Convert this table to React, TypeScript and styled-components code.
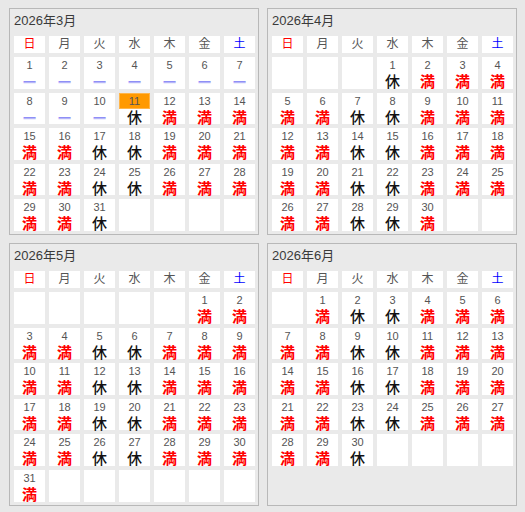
import React from 'react'
import styled, { createGlobalStyle } from 'styled-components'

const GlobalStyle = createGlobalStyle`
  html, body {
    margin: 0;
    padding: 0;
    background: #e8e8e8;
    font-family: "Liberation Sans", "Noto Sans CJK JP", sans-serif;
  }
  * { box-sizing: border-box; }
`

const Page = styled.div`
  display: grid;
  grid-template-columns: 250px 250px;
  gap: 8px;
  padding: 8px 0 6px 9px;
`

const Panel = styled.section`
  display: flex;
  flex-direction: column;
  border: 1px solid #b8b8b8;
  background: #eaeaea;
  padding: 4px 3px 3px 4px;
`

const Title = styled.h2`
  margin: 0 0 4px;
  height: 19px;
  font-size: 13px;
  font-weight: normal;
  line-height: 15px;
  color: #3a3a3a;
`

const Grid = styled.div`
  display: grid;
  grid-template-columns: repeat(7, 31px);
  grid-template-rows: 17px;
  grid-auto-rows: 31.6px;
  gap: 4px;
`

const WeekHead = styled.div<{ $tone: string }>`
  background: #fff;
  text-align: center;
  font-size: 12px;
  line-height: 17px;
  color: ${({ $tone }) => $tone};
`

const DayCell = styled.div`
  display: flex;
  flex-direction: column;
  background: #fff;
`

const DayNum = styled.div<{ $today?: boolean }>`
  height: 16px;
  line-height: 16px;
  text-align: center;
  font-size: 11px;
  color: #555;
  background: ${({ $today }) => ($today ? '#ff9900' : 'transparent')};
  box-shadow: ${({ $today }) => ($today ? 'inset 0 0 0 1px #ffb54a' : 'none')};
`

const Status = styled.div<{ $kind: Kind }>`
  text-align: center;
  line-height: 15px;
  font-family: "Noto Sans CJK JP", sans-serif;
  font-size: 15px;
  font-weight: ${({ $kind }) => ($kind === 'full' ? 'bold' : '500')};
  color: ${({ $kind }) => ($kind === 'full' ? '#ff0000' : '#111')};
`

const Dash = styled.div`
  text-align: center;
  line-height: 16px;
  font-family: "Liberation Sans", sans-serif;
  font-size: 12px;
  font-weight: bold;
  color: #8f8ff6;
  text-shadow: 0 1px 0 #c4c4fa;
`

type Kind = 'full' | 'closed' | 'past'

const weekdays = [
  { label: '日', tone: '#ff0000' },
  { label: '月', tone: '#555' },
  { label: '火', tone: '#555' },
  { label: '水', tone: '#555' },
  { label: '木', tone: '#555' },
  { label: '金', tone: '#555' },
  { label: '土', tone: '#0000ff' },
]

const TODAY = { month: 3, day: 11 }

const kindOf = (month: number, day: number, dow: number): Kind => {
  if (month === TODAY.month && day < TODAY.day) return 'past'
  // 火・水 は定休日
  if (dow === 2 || dow === 3) return 'closed'
  return 'full'
}

const Month: React.FC<{ year: number; month: number }> = ({ year, month }) => {
  const first = new Date(year, month - 1, 1).getDay()
  const days = new Date(year, month, 0).getDate()
  const total = Math.ceil((first + days) / 7) * 7
  const cells = Array.from({ length: total }, (_, i) => i - first + 1)

  return (
    <Panel>
      <Title>{year}年{month}月</Title>
      <Grid>
        {weekdays.map((w) => (
          <WeekHead key={w.label} $tone={w.tone}>{w.label}</WeekHead>
        ))}
        {cells.map((d, i) => {
          if (d < 1 || d > days) return <DayCell key={i} />
          const kind = kindOf(month, d, i % 7)
          const today = month === TODAY.month && d === TODAY.day
          return (
            <DayCell key={i}>
              <DayNum $today={today}>{d}</DayNum>
              {kind === 'past' ? (
                <Dash>—</Dash>
              ) : (
                <Status $kind={kind}>{kind === 'full' ? '満' : '休'}</Status>
              )}
            </DayCell>
          )
        })}
      </Grid>
    </Panel>
  )
}

const App: React.FC = () => (
  <>
    <GlobalStyle />
    <Page>
      {[3, 4, 5, 6].map((m) => (
        <Month key={m} year={2026} month={m} />
      ))}
    </Page>
  </>
)

export default App
